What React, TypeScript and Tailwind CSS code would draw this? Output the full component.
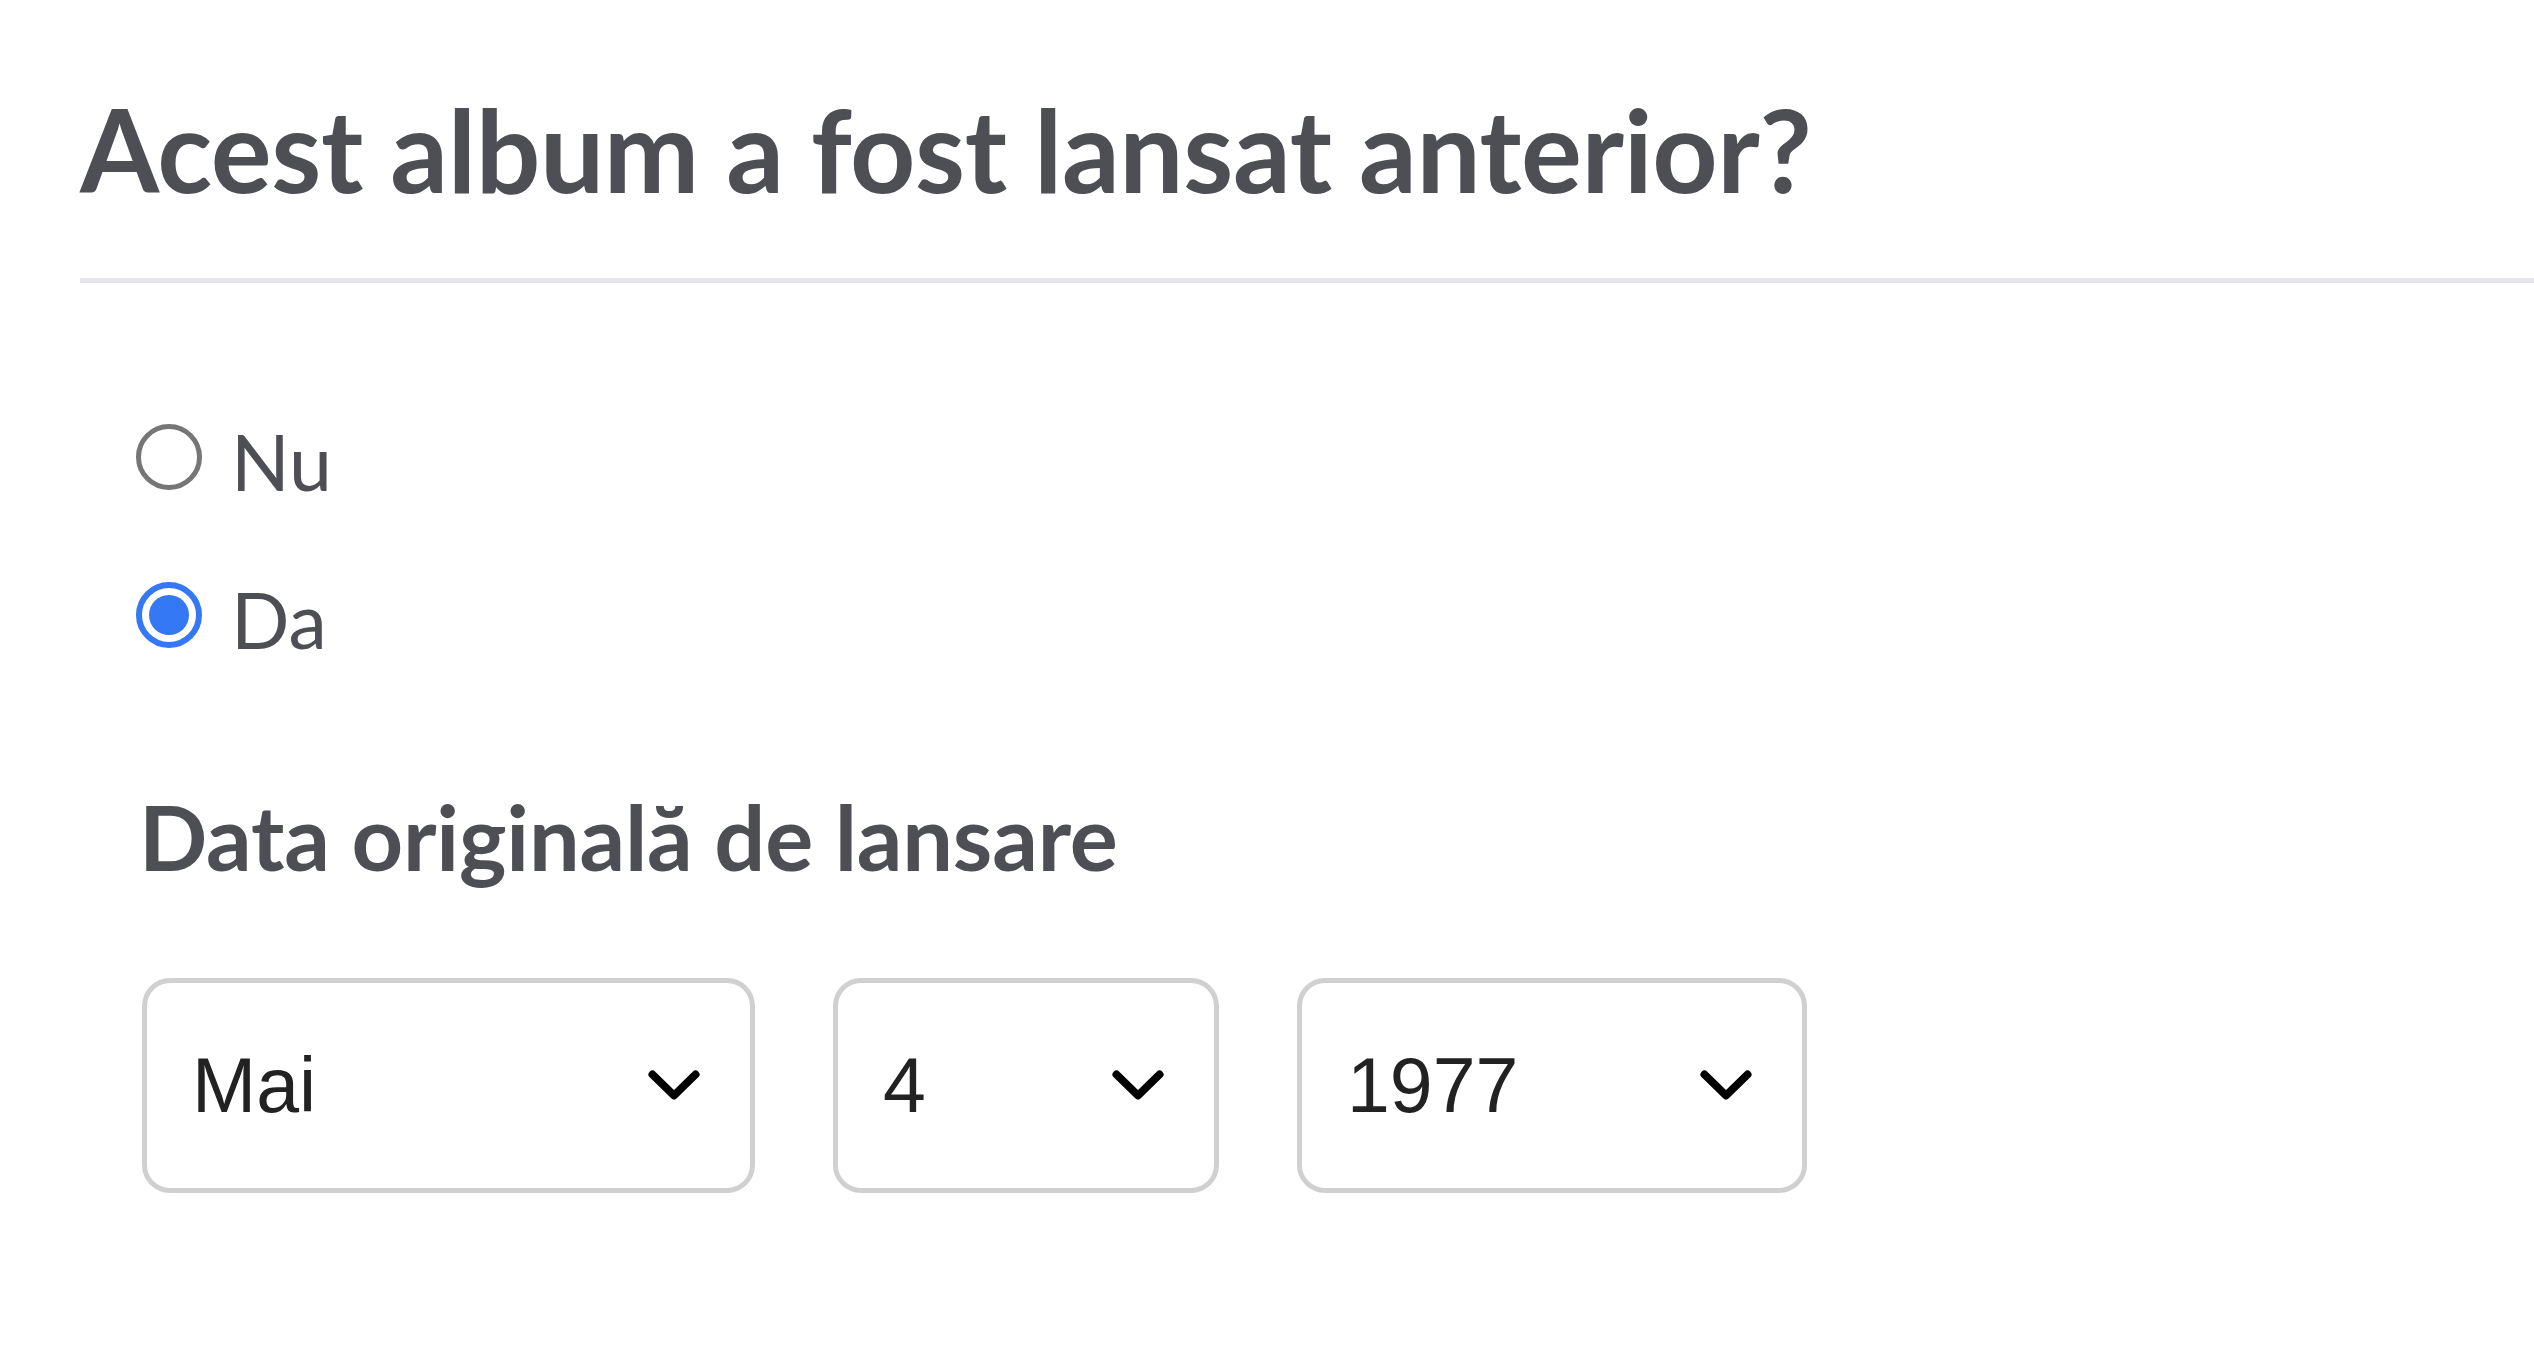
import React from 'react';

const Chevron = () => (
  <svg width="52" height="30" viewBox="0 0 52 30" fill="none" className="shrink-0">
    <polyline points="4.5,4.5 26,25.5 47.5,4.5" stroke="#000" strokeWidth="8" strokeLinecap="round" strokeLinejoin="round" />
  </svg>
);

const Radio = ({ checked, label }: { checked?: boolean; label: string }) => (
  <label className="flex items-start">
    {checked ? (
      <span className="mt-[9px] w-[66px] h-[66px] rounded-full border-[6px] border-[#3478f6] flex items-center justify-center shrink-0">
        <span className="w-[40px] h-[40px] rounded-full bg-[#3478f6]" />
      </span>
    ) : (
      <span className="mt-[9px] w-[66px] h-[66px] rounded-full border-[5px] border-[#767676] shrink-0" />
    )}
    <span className="ml-[29px] text-[77px] leading-[1.2] text-[#4e4e55]">{label}</span>
  </label>
);

const SelectBox = ({ value, width }: { value: string; width: string }) => (
  <div className={`${width} h-[215px] border-[5px] border-[#d0d0d0] rounded-[28px] bg-white flex items-center justify-between pl-[45px] pr-[50px]`}>
    <span className="text-[77px] leading-none text-[#222]" style={{ fontFamily: '"Liberation Sans", Arial, sans-serif' }}>{value}</span>
    <Chevron />
  </div>
);

export default function App() {
  return (
    <div className="min-h-screen bg-white pl-[80px] pt-[81px]" style={{ fontFamily: 'Lato, "Noto Sans", sans-serif' }}>
      <h1 className="text-[114px] leading-[1.2] font-bold tracking-[-0.4px] text-[#4e4e55]">Acest album a fost lansat anterior?</h1>
      <div className="mt-[60px] h-[5px] bg-[#e6e6ea]" />

      <div className="pl-[56px]">
        <div className="mt-[132px] flex flex-col gap-[66px]">
          <Radio label="Nu" />
          <Radio checked label="Da" />
        </div>

        <h2 className="mt-[116px] ml-[3px] text-[90px] leading-[1.2] font-bold tracking-[-0.2px] text-[#4e4e55]">Data originală de lansare</h2>

        <div className="mt-[88px] ml-[6px] flex gap-[78px]">
          <SelectBox value="Mai" width="w-[613px]" />
          <SelectBox value="4" width="w-[386px]" />
          <SelectBox value="1977" width="w-[510px]" />
        </div>
      </div>
    </div>
  );
}
